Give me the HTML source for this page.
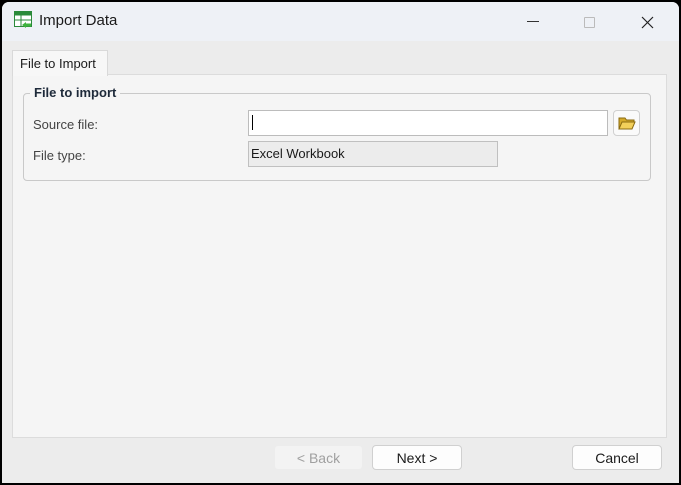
<!DOCTYPE html>
<html><head><style>
*{margin:0;padding:0;box-sizing:border-box}
body{width:681px;height:485px;background:#000;position:relative;overflow:hidden;font-family:"Liberation Sans",sans-serif;font-size:13px;color:#1a1a1a}
.win{position:absolute;left:2px;top:2px;width:677px;height:481px;background:#ececec;border-radius:7px 7px 0 0;overflow:hidden}
.title{position:absolute;left:0;top:0;width:677px;height:39px;background:#eef1f6}
.abs{position:absolute}
.tab{left:10px;top:48px;width:96px;height:26px;background:#f7f7f7;border:1px solid #d9d9d9;border-bottom:none;padding:5px 0 0 7px;font-size:13px}
.panel{left:10px;top:72px;width:655px;height:364px;background:#f5f5f5;border:1px solid #dcdcdc}
.grp{left:21px;top:91px;width:628px;height:88px;border:1px solid #c9c9c9;border-radius:4px}
.btn{background:#fdfdfd;border:1px solid #d0d0d0;border-radius:4px;text-align:center;font-size:14px;padding-top:4px;height:25px}
</style></head><body>
<div class="win">
<div class="title">
<svg class="abs" style="left:12px;top:9px" width="19" height="19" viewBox="0 0 19 19">
<rect x="0.5" y="0.5" width="17" height="15" fill="#fff" stroke="#2a8a3a"/>
<rect x="0.5" y="0.5" width="17" height="4" fill="#2a8a3a"/>
<line x1="0.5" y1="9" x2="17.5" y2="9" stroke="#2a8a3a"/>
<line x1="7" y1="0.5" x2="7" y2="15.5" stroke="#2a8a3a"/>
<path d="M8 14 L12 11 L12 12.5 L17 12.5 L17 15.5 L12 15.5 L12 17 Z" fill="#3db33d"/>
</svg>
<div class="abs" style="left:37px;top:10px;font-size:15px">Import Data</div>
<div class="abs" style="left:525px;top:19px;width:12px;height:1px;background:#333"></div>
<div class="abs" style="left:582px;top:15px;width:11px;height:11px;border:1px solid #bbb;border-radius:1px"></div>
<svg class="abs" style="left:639px;top:14px" width="13" height="13"><path d="M1 1L12 12M12 1L1 12" stroke="#222" stroke-width="1.2"/></svg>
</div>
<div class="abs panel"></div>
<div class="abs tab">File to Import</div>
<div class="abs grp"></div>
<div class="abs" style="left:28px;top:83px;background:#f5f5f5;padding:0 4px;font-weight:bold;font-size:13px;color:#1e2a3a">File to import</div>
<div class="abs" style="left:31px;top:115px;color:#444">Source file:</div>
<div class="abs" style="left:31px;top:146px;color:#444">File type:</div>
<div class="abs" style="left:246px;top:108px;width:360px;height:26px;background:#fff;border:1px solid #bcbcbc"><div class="abs" style="left:3px;top:4px;width:1px;height:15px;background:#000"></div></div>
<div class="abs" style="left:611px;top:108px;width:27px;height:26px;border:1px solid #d0d0d0;border-radius:4px;background:#fafafa">
<svg class="abs" style="left:4px;top:5px" width="18" height="15"><path d="M1 2h6l1.5 2H16v3H4L1 13Z" fill="#d4a92a" stroke="#8a6a10"/><path d="M1 13L4 6h13l-3 7Z" fill="#f2cf5a" stroke="#8a6a10"/></svg></div>
<div class="abs" style="left:246px;top:139px;width:250px;height:26px;background:#ececec;border:1px solid #c0c0c0;padding:4px 0 0 2px">Excel Workbook</div>
<div class="abs btn" style="left:272px;top:443px;width:89px;background:#f3f3f3;border-color:#ececec;color:#a0a0a0">&lt; Back</div>
<div class="abs btn" style="left:370px;top:443px;width:90px">Next &gt;</div>
<div class="abs btn" style="left:570px;top:443px;width:90px">Cancel</div>
</div>
</body></html>
